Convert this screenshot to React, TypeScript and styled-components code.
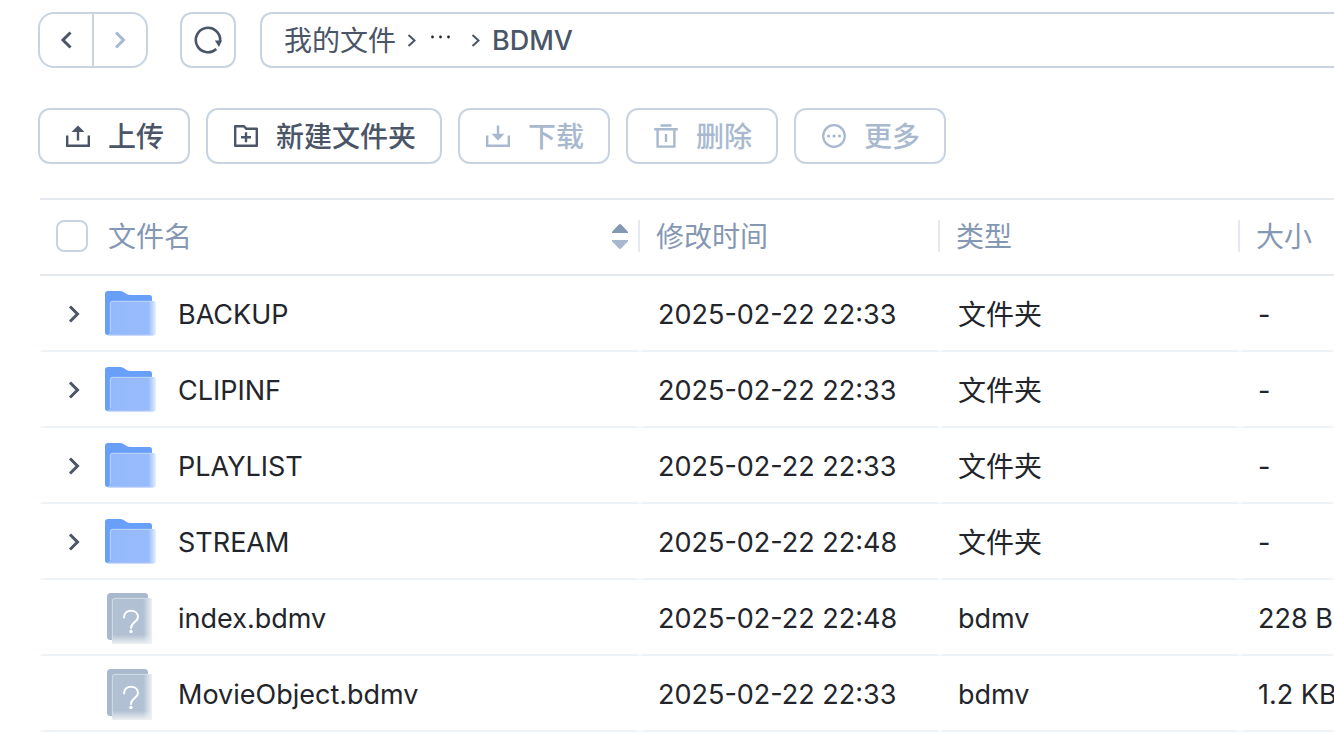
import React from 'react';
import styled, { createGlobalStyle, css } from 'styled-components';

const ink = '#4a5568';
const muted = '#8598b3';
const disabled = '#a8b9cf';
const outline = '#c8d4e2';

const GlobalStyle = createGlobalStyle`
  *, *::before, *::after { box-sizing: border-box; }
  body {
    margin: 0;
    background: #fff;
    color: #22252b;
    font-family: Inter, "Noto Sans CJK SC", sans-serif;
    font-size: 28px;
    line-height: 40px;
    overflow-x: hidden;
  }
  button, input, a { font: inherit; color: inherit; }
`;

const Page = styled.main`
  padding: 12px 0 0 38px;
  overflow: hidden;
`;

const TopBar = styled.header`
  display: flex;
`;

const iconButton = css`
  display: flex;
  align-items: center;
  justify-content: center;
  padding: 0;
  border: 0;
  background: none;
  color: ${ink};
  cursor: pointer;
  &:disabled { color: ${disabled}; cursor: default; }
`;

const History = styled.div`
  display: flex;
  flex: none;
  width: 110px;
  height: 56px;
  border: 2px solid ${outline};
  border-radius: 16px;
`;

const HistoryButton = styled.button`
  ${iconButton}
  flex: 1;
  & + & { border-left: 2px solid ${outline}; }
`;

const RefreshButton = styled.button`
  ${iconButton}
  flex: none;
  width: 56px;
  height: 56px;
  margin: 0 24px 0 32px;
  border: 2px solid ${outline};
  border-radius: 12px;
`;

const Breadcrumb = styled.nav`
  display: flex;
  flex: 1;
  align-items: center;
  height: 56px;
  padding: 2px 0 0 22px;
  border: 2px solid ${outline};
  border-right: 0;
  border-radius: 12px 0 0 12px;
  color: ${ink};
  white-space: nowrap;
`;

const Crumb = styled.a`
  text-decoration: none;
`;

const CurrentCrumb = styled.span`
  font-size: 27px;
  font-weight: 500;
`;

const CrumbArrow = styled.svg`
  flex: none;
  width: 32px;
  height: 32px;
`;

const MoreCrumbs = styled.button`
  ${iconButton}
  width: 32px;
  height: 40px;
  color: #22252b;
`;

const Toolbar = styled.div`
  display: flex;
  gap: 16px;
  margin-top: 40px;
`;

const ToolButton = styled.button`
  display: flex;
  align-items: center;
  gap: 16px;
  height: 56px;
  padding: 0 24px;
  border: 2px solid ${outline};
  border-radius: 12px;
  background: #fff;
  color: ${ink};
  font-weight: 500;
  white-space: nowrap;
  cursor: pointer;
  &:disabled { color: ${disabled}; cursor: default; }
`;

const ToolLabel = styled.span`
  padding-top: 2px;
`;

const ToolIcon = styled.svg`
  flex: none;
  width: 28px;
  height: 28px;
`;

const FileTable = styled.table`
  width: calc(100% - 2px);
  margin: 34px 0 0 2px;
  table-layout: fixed;
  border-collapse: separate;
  border-spacing: 0;
  text-align: left;
`;

const Column = styled.col<{ $width?: number }>`
  width: ${({ $width }) => ($width ? `${$width}px` : 'auto')};
`;

const HeadCell = styled.th`
  height: 78px;
  padding: 0 0 2px;
  border: solid #e4e9f0;
  border-width: 2px 0;
  color: ${muted};
  font-weight: 400;
  white-space: nowrap;
`;

const HeadContent = styled.div<{ $divider?: boolean }>`
  display: flex;
  align-items: center;
  height: 32px;
  padding: 2px 0 0 16px;
  border-right: ${({ $divider }) => ($divider ? '2px solid #e4e9f0' : '0')};
`;

const Checkbox = styled.input`
  appearance: none;
  flex: none;
  width: 32px;
  height: 32px;
  margin: -2px 20px 0 0;
  border: 2px solid ${outline};
  border-radius: 8px;
  background: #fff;
  &:checked { background: #6b9ff8; border-color: #6b9ff8; }
`;

const SortButton = styled.button`
  ${iconButton}
  margin: 0 10px 0 auto;
`;

const Cell = styled.td`
  height: 76px;
  padding: 4px 0 0 16px;
  border: 2px solid transparent;
  border-top-width: 0;
  border-bottom-color: #eef3f8;
  font-size: 27px;
  white-space: nowrap;
`;

const NameCell = styled(Cell)`
  padding-top: 2px;
`;

const KindCell = styled(Cell)<{ $folder: boolean }>`
  font-size: ${({ $folder }) => ($folder ? '28px' : '27px')};
`;

const NameContent = styled.div`
  display: flex;
  align-items: center;
`;

const ExpandSlot = styled.div`
  display: flex;
  flex: none;
  width: 32px;
  margin-right: 14px;
`;

const ExpandButton = styled.button`
  ${iconButton}
  width: 32px;
  height: 32px;
`;

const FileIcon = styled.svg`
  flex: none;
  width: 56px;
  height: 56px;
  margin-right: 18px;
`;

const FileName = styled.a`
  padding-top: 2px;
  text-decoration: none;
`;

const Chevron = ({ back = false }: { back?: boolean }) => (
  <svg width="32" height="32" viewBox="0 0 32 32" fill="none" stroke="currentColor" strokeWidth="3" aria-hidden="true">
    <path d={back ? 'M20.500 8.500 13 16 20.500 23.500' : 'M12 8.500 19.500 16 12 23.500'} />
  </svg>
);

const Separator = () => (
  <CrumbArrow viewBox="0 0 32 32" fill="none" stroke="currentColor" strokeWidth="2" aria-hidden="true">
    <path d="M12.500 10 18.500 15.500 12.500 21" />
  </CrumbArrow>
);

const RefreshIcon = () => (
  <svg width="32" height="32" viewBox="0 0 32 32" fill="none" aria-hidden="true">
    <path d="M24.300 25A12.200 12.200 0 1 1 28.200 17" stroke="currentColor" strokeWidth="2.600" />
    <path d="M22.800 16.400h7.200l-3 6.600z" fill="currentColor" />
  </svg>
);

const UploadIcon = () => (
  <ToolIcon viewBox="0 0 28 28" fill="none" stroke="currentColor" strokeWidth="2.400" aria-hidden="true">
    <path d="M3.200 13.500v10.300h21.600V13.500M14 18.500V8" />
    <path d="M7.500 10 14 3.600 20.500 10z" fill="currentColor" stroke="none" />
  </ToolIcon>
);

const NewFolderIcon = () => (
  <ToolIcon viewBox="0 0 28 28" fill="none" stroke="currentColor" strokeWidth="2.400" strokeLinejoin="round" aria-hidden="true">
    <path d="M3.200 4.200h8.600l2.600 2.600h10.400v17H3.200zM14 10.300v10M9 15.300h10" />
  </ToolIcon>
);

const DownloadIcon = () => (
  <ToolIcon viewBox="0 0 28 28" fill="none" stroke="currentColor" strokeWidth="2.400" aria-hidden="true">
    <path d="M3.200 13.500v10.300h21.600V13.500M14 3.500V13" />
    <path d="M7.500 11.800h13L14 18.400z" fill="currentColor" stroke="none" />
  </ToolIcon>
);

const DeleteIcon = () => (
  <ToolIcon viewBox="0 0 28 28" fill="none" stroke="currentColor" strokeWidth="2.400" aria-hidden="true">
    <path d="M8.500 3.500h11M2.200 7.300h23.600M5.600 7.300v17.300h16.800V7.300M14 12v8" />
  </ToolIcon>
);

const MoreIcon = () => (
  <ToolIcon viewBox="0 0 28 28" fill="none" stroke="currentColor" strokeWidth="2.200" aria-hidden="true">
    <circle cx="14" cy="14" r="10.800" />
    <g fill="currentColor" stroke="none">
      <circle cx="8.500" cy="14" r="1.600" />
      <circle cx="14" cy="14" r="1.600" />
      <circle cx="19.500" cy="14" r="1.600" />
    </g>
  </ToolIcon>
);

const SortIcon = () => (
  <svg width="16" height="28" viewBox="1 0 16 28" aria-hidden="true">
    <path d="M1 10V8.800L7.600 1.800Q9 .4 10.400 1.800L17 8.800V10z" fill={muted} />
    <path d="M1 17v1.200l6.600 7q1.400 1.400 2.800 0L17 18.200V17z" fill={disabled} />
  </svg>
);

const IconGradients = () => (
  <svg width="0" height="0" style={{ position: 'absolute' }} aria-hidden="true">
    <defs>
      <linearGradient id="folderFront" x1="0" x2="1" y1="0" y2="0">
        <stop offset="0" stopColor="#94b9fb" />
        <stop offset="0.840" stopColor="#98bbfb" />
        <stop offset="1" stopColor="#e6effe" />
      </linearGradient>
      <linearGradient id="fileRight" x1="0" x2="1" y1="0" y2="0">
        <stop offset="0.780" stopColor="#eef0f3" stopOpacity="0" />
        <stop offset="1" stopColor="#eef0f3" />
      </linearGradient>
      <linearGradient id="fileBottom" x1="0" x2="0" y1="0" y2="1">
        <stop offset="0.800" stopColor="#eef0f3" stopOpacity="0" />
        <stop offset="1" stopColor="#eef0f3" />
      </linearGradient>
    </defs>
  </svg>
);

const FolderIcon = () => (
  <FileIcon viewBox="0 0 56 56" aria-hidden="true">
    <path d="M1 8Q1 5 4 5H15.500Q18 5 20 6.300L22.500 8Q24 9 27 9H45.500Q48 9 48 12V40H6V46Q6 49 3.500 49Q1 49 1 46z" fill="#689ff8" />
    <path d="M6 17.500Q6 15 8.500 15H49.500Q52 15 52 17.500V47Q52 49.500 49.500 49.500H4Q6 49 6 46z" fill="url(#folderFront)" />
    <path d="M6.300 46V17.500Q6.300 15.300 8.500 15.300H48" fill="none" stroke="#c9dcfd" strokeWidth="0.800" />
    <path d="M4 49.200H49" stroke="#c9dcfd" strokeWidth="0.800" />
  </FileIcon>
);

const UnknownIcon = () => (
  <FileIcon viewBox="0 0 56 56" aria-hidden="true">
    <rect x="3" y="3" width="41" height="47" rx="3.500" fill="#a9b9cd" />
    <rect x="8" y="8" width="40" height="46" rx="3" fill="#b1c0d3" />
    <rect x="8" y="8" width="40" height="46" rx="3" fill="url(#fileRight)" />
    <rect x="8" y="8" width="40" height="46" rx="3" fill="url(#fileBottom)" />
    <path d="M8.400 50V11Q8.400 8.400 11 8.400H44" fill="none" stroke="#dce3eb" strokeWidth="0.800" />
    <path d="M20 27.500C20 23 23 20.700 27 20.700S34 23.300 34 27C34 32 27 32 27 38" fill="none" stroke="#fff" strokeWidth="2" strokeLinecap="round" />
    <circle cx="27" cy="41.500" r="1.700" fill="#fff" />
  </FileIcon>
);

const files = [
  { name: 'BACKUP', modified: '2025-02-22 22:33', kind: '文件夹', size: '-', folder: true },
  { name: 'CLIPINF', modified: '2025-02-22 22:33', kind: '文件夹', size: '-', folder: true },
  { name: 'PLAYLIST', modified: '2025-02-22 22:33', kind: '文件夹', size: '-', folder: true },
  { name: 'STREAM', modified: '2025-02-22 22:48', kind: '文件夹', size: '-', folder: true },
  { name: 'index.bdmv', modified: '2025-02-22 22:48', kind: 'bdmv', size: '228 B', folder: false },
  { name: 'MovieObject.bdmv', modified: '2025-02-22 22:33', kind: 'bdmv', size: '1.2 KB', folder: false },
];

export default function App() {
  return (
    <Page lang="zh-CN">
      <GlobalStyle />
      <IconGradients />
      <TopBar>
        <History>
          <HistoryButton type="button" aria-label="后退"><Chevron back /></HistoryButton>
          <HistoryButton type="button" aria-label="前进" disabled><Chevron /></HistoryButton>
        </History>
        <RefreshButton type="button" aria-label="刷新"><RefreshIcon /></RefreshButton>
        <Breadcrumb aria-label="路径">
          <Crumb href="#root">我的文件</Crumb>
          <Separator />
          <MoreCrumbs type="button" aria-label="展开路径">
            <svg width="32" height="32" viewBox="0 0 32 32" fill="currentColor" aria-hidden="true">
              <circle cx="4.500" cy="12" r="1.400" />
              <circle cx="12.500" cy="12" r="1.400" />
              <circle cx="20.500" cy="12" r="1.400" />
            </svg>
          </MoreCrumbs>
          <Separator />
          <CurrentCrumb aria-current="page">BDMV</CurrentCrumb>
        </Breadcrumb>
      </TopBar>
      <Toolbar>
        <ToolButton type="button"><UploadIcon /><ToolLabel>上传</ToolLabel></ToolButton>
        <ToolButton type="button"><NewFolderIcon /><ToolLabel>新建文件夹</ToolLabel></ToolButton>
        <ToolButton type="button" disabled><DownloadIcon /><ToolLabel>下载</ToolLabel></ToolButton>
        <ToolButton type="button" disabled><DeleteIcon /><ToolLabel>删除</ToolLabel></ToolButton>
        <ToolButton type="button" disabled><MoreIcon /><ToolLabel>更多</ToolLabel></ToolButton>
      </Toolbar>
      <FileTable>
        <colgroup>
          <Column $width={600} />
          <Column $width={300} />
          <Column $width={300} />
          <Column />
        </colgroup>
        <thead>
          <tr>
            <HeadCell scope="col">
              <HeadContent $divider>
                <Checkbox type="checkbox" id="select-all" />
                <label htmlFor="select-all">文件名</label>
                <SortButton type="button" aria-label="排序"><SortIcon /></SortButton>
              </HeadContent>
            </HeadCell>
            <HeadCell scope="col"><HeadContent $divider>修改时间</HeadContent></HeadCell>
            <HeadCell scope="col"><HeadContent $divider>类型</HeadContent></HeadCell>
            <HeadCell scope="col"><HeadContent>大小</HeadContent></HeadCell>
          </tr>
        </thead>
        <tbody>
          {files.map((file) => (
            <tr key={file.name}>
              <NameCell>
                <NameContent>
                  <ExpandSlot>
                    {file.folder && (
                      <ExpandButton type="button" aria-label={`展开 ${file.name}`}><Chevron /></ExpandButton>
                    )}
                  </ExpandSlot>
                  {file.folder ? <FolderIcon /> : <UnknownIcon />}
                  <FileName href={`#${file.name}`}>{file.name}</FileName>
                </NameContent>
              </NameCell>
              <Cell>{file.modified}</Cell>
              <KindCell $folder={file.folder}>{file.kind}</KindCell>
              <Cell>{file.size}</Cell>
            </tr>
          ))}
        </tbody>
      </FileTable>
    </Page>
  );
}
